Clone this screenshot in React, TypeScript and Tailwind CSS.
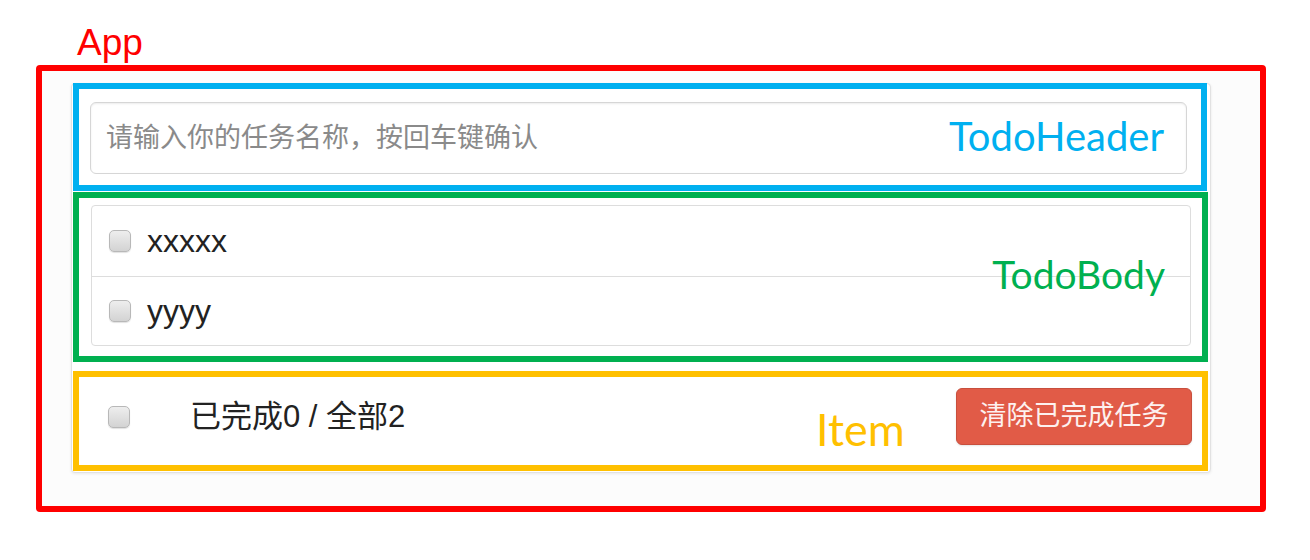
import React from "react";

const cjk = "font-['Liberation_Sans','Noto_Sans_CJK_SC',sans-serif]";

function Checkbox() {
  return (
    <input
      type="checkbox"
      className="appearance-none w-[22px] h-[22px] shrink-0 rounded-[5px] border border-[#b8b8b8] bg-linear-to-b from-[#eeeeee] to-[#d3d3d3] shadow-[0_1px_1px_rgba(0,0,0,0.12)]"
    />
  );
}

function TodoHeader() {
  return (
    <div className="relative -mt-px ml-px w-[1134px] h-[108px] border-[6px] border-[#00b0f0] pt-[13px] pl-[11px]">
      <input
        type="text"
        placeholder="请输入你的任务名称，按回车键确认"
        className={`w-[1097px] h-[72px] pl-[15px] rounded-[6px] border border-[#d6d6d6] bg-white text-[27px] text-[#555] placeholder:text-[#8a8a8a] shadow-[inset_0_1px_2px_rgba(0,0,0,0.08)] outline-none ${cjk}`}
      />
      <span className="absolute top-[27px] right-[37px] text-[40px] leading-none text-[#00b0f0] font-[Lato,sans-serif]">
        TodoHeader
      </span>
    </div>
  );
}

function TodoBody() {
  const todos = ["xxxxx", "yyyy"];
  return (
    <div className="relative mt-px ml-px w-[1135px] h-[170px] border-[6px] border-[#00b050] pt-[7px] pl-[12px]">
      <ul className="w-[1100px] h-[141px] border border-[#dddddd] rounded-[4px] bg-white">
        {todos.map((t, i) => (
          <li
            key={t}
            className={`flex items-center pl-[17px] ${i === 0 ? "h-[71px] border-b border-[#dddddd]" : "h-[68px]"}`}
          >
            <Checkbox />
            <span className={`ml-[16px] text-[32px] leading-none text-[#222] ${cjk}`}>{t}</span>
          </li>
        ))}
      </ul>
      <span className="absolute top-[57px] right-[37px] text-[39px] leading-none text-[#00b050] font-[Lato,sans-serif]">
        TodoBody
      </span>
    </div>
  );
}

function Item() {
  return (
    <div className="relative mt-[9px] ml-px w-[1135px] h-[100px] border-[6px] border-[#ffc000] flex items-center pl-[29px] pr-[10px] pb-[9px]">
      <Checkbox />
      <span className={`ml-[60px] text-[31px] leading-none text-[#222] ${cjk}`}>已完成0 / 全部2</span>
      <button
        className={`ml-auto w-[236px] h-[57px] rounded-[6px] border border-[#c84f3d] bg-[#e15b47] text-[27px] leading-none text-[#fdf1ef] shadow-[0_1px_2px_rgba(0,0,0,0.1)] ${cjk}`}
      >
        清除已完成任务
      </button>
      <span className="absolute top-[30px] left-[737px] text-[45px] leading-none text-[#ffc000] font-[Lato,sans-serif]">
        Item
      </span>
    </div>
  );
}

export default function App() {
  return (
    <div className="min-h-screen bg-white pt-[24px] pl-[36px]">
      <div className="pl-[41px] text-[37px] leading-none text-[#ff0000] font-['Liberation_Sans',sans-serif]">App</div>
      <div className="mt-[4px] w-[1230px] h-[447px] border-[6px] border-[#ff0000] rounded-[4px] bg-[#fcfcfc] pt-[12px] pl-[29px]">
        <div className="w-[1140px] h-[390px] border border-[#e2e2e2] rounded-[4px] bg-white shadow-[0_1px_3px_rgba(0,0,0,0.08)]">
          <TodoHeader />
          <TodoBody />
          <Item />
        </div>
      </div>
    </div>
  );
}
